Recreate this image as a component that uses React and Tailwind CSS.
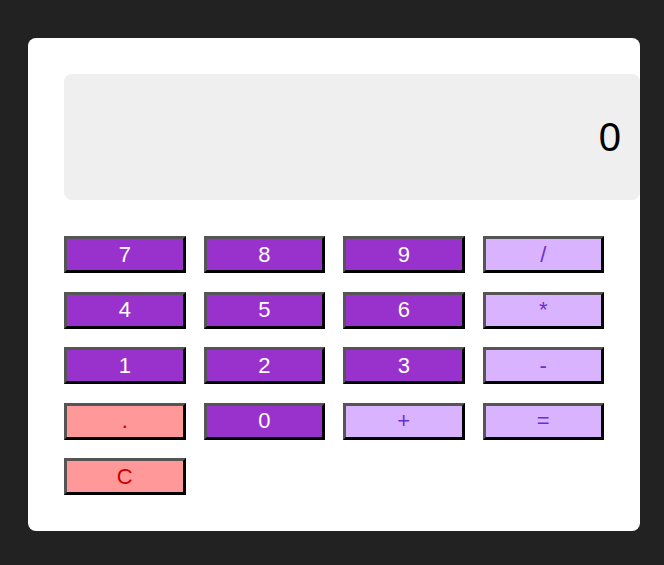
export default function App() {
  const rows = [
    [["7", "n"], ["8", "n"], ["9", "n"], ["/", "o"]],
    [["4", "n"], ["5", "n"], ["6", "n"], ["*", "o"]],
    [["1", "n"], ["2", "n"], ["3", "n"], ["-", "o"]],
    [[".", "c"], ["0", "n"], ["+", "o"], ["=", "o"]],
    [["C", "c"]],
  ];
  const cls = {
    n: "bg-[#9932cc] text-white",
    o: "bg-[#dab3ff] text-[#6a2fd0]",
    c: "bg-[#ff9999] text-[#cc0000]",
  };
  return (
    <div className="w-[664px] h-[565px] bg-[#222222] pt-[38px] pl-[28px]" style={{ fontFamily: '"Liberation Sans", Arial, sans-serif' }}>
      <div className="w-[612px] h-[493px] bg-white rounded-[8px] p-[36px]">
        <div className="w-[576px] h-[126px] bg-[#efefef] rounded-[8px] flex items-center justify-end pr-[19px] text-[40px] text-black">
          0
        </div>
        <div className="mt-[36px] grid grid-cols-4 gap-x-[18px] gap-y-[18.5px] w-[540px]">
          {rows.flat().map(([label, kind]) => (
            <button
              key={label}
              className={`h-[37px] border-[3px] border-solid border-t-[#555555] border-l-[#555555] border-b-black border-r-black flex items-center justify-center text-[22px] leading-none ${cls[kind]}`}
            >
              {label}
            </button>
          ))}
        </div>
      </div>
    </div>
  );
}
